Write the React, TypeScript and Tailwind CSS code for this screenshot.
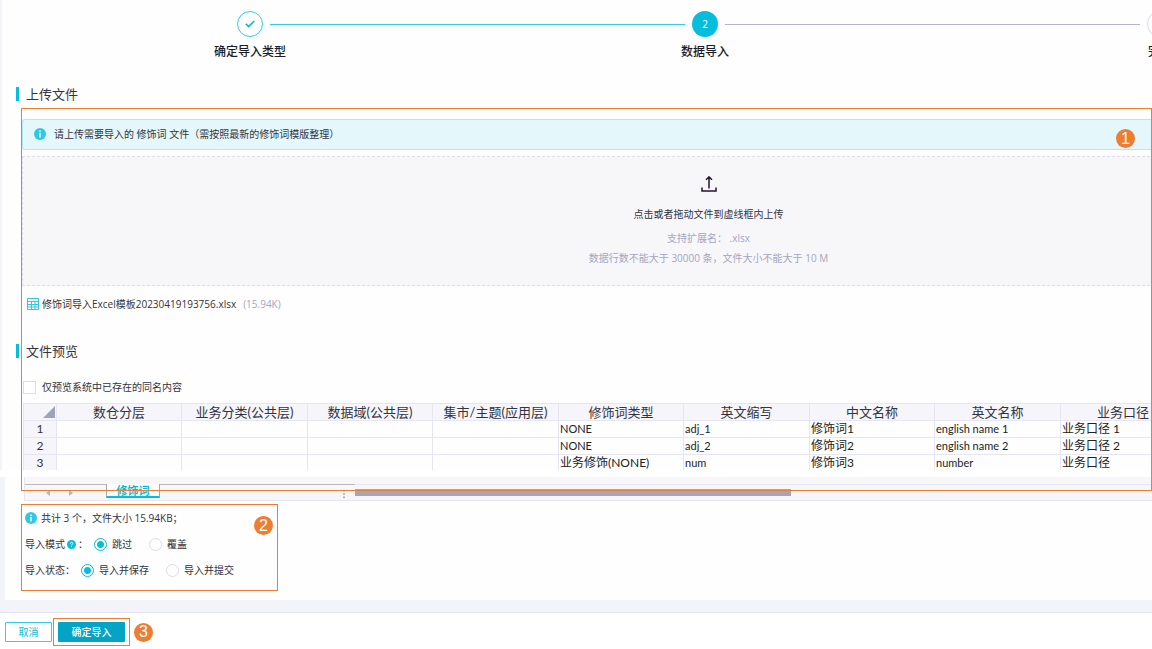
import React from 'react';
import { clsx } from 'clsx';

const columns = [
  '数仓分层',
  '业务分类(公共层)',
  '数据域(公共层)',
  '集市/主题(应用层)',
  '修饰词类型',
  '英文缩写',
  '中文名称',
  '英文名称',
  '业务口径',
];

const rows = [
  ['', '', '', '', 'NONE', 'adj_1', '修饰词1', 'english name 1', '业务口径 1'],
  ['', '', '', '', 'NONE', 'adj_2', '修饰词2', 'english name 2', '业务口径 2'],
  ['', '', '', '', '业务修饰(NONE)', 'num', '修饰词3', 'number', '业务口径'],
];

const isLatin = (text: string) => /^[\x20-\x7e]*$/.test(text);

const InfoIcon = () => (
  <svg viewBox="0 0 12 12" className="size-3 shrink-0" aria-hidden="true">
    <circle cx="6" cy="6" r="6" fill="#33c8e2" />
    <rect x="5.2" y="2.5" width="1.6" height="1.5" fill="#e6f8fb" />
    <rect x="5.2" y="4.8" width="1.6" height="4.6" fill="#e6f8fb" />
  </svg>
);

const HelpIcon = () => (
  <svg viewBox="0 0 9 9" className="size-[9px] shrink-0" aria-hidden="true">
    <circle cx="4.5" cy="4.5" r="4.5" fill="#06bddb" />
    <path d="M3.3 3.6c0-1.7 2.5-1.6 2.5-.1 0 .8-1.2.9-1.2 1.9M4.6 6.3v.8" fill="none" stroke="#fff" strokeWidth=".9" />
  </svg>
);

const SheetIcon = () => (
  <svg viewBox="0 0 12 12" className="size-3 shrink-0" fill="none" stroke="#33c8e2" aria-hidden="true">
    <path d="M.5.5h11v11H.5zM.5 3.5h11M.5 6.5h11M.5 9h11M4.5 3.5v8M8 3.5v8" />
  </svg>
);

const UploadIcon = () => (
  <svg viewBox="0 0 16 16" className="size-4" fill="none" stroke="#25152f" strokeWidth="1.5" aria-hidden="true">
    <path d="M8 12.5V1M5 3.8 8 .9l3 2.9M1 11.5V15h14v-3.5" />
  </svg>
);

const Badge = ({ n, className }: { n: number; className?: string }) => (
  <span
    className={clsx(
      "flex size-[19px] items-center justify-center rounded-full bg-[#ed7d31] font-['Liberation_Sans'] text-base leading-none text-white",
      className,
    )}
  >
    {n}
  </span>
);

const Step = ({ label, className, children }: { label: string; className: string; children?: React.ReactNode }) => (
  <li className="flex w-[26px] shrink-0 flex-col items-center">
    <span className={clsx('flex size-[26px] items-center justify-center rounded-full text-[10px]', className)}>
      {children}
    </span>
    <span className="mt-[7px] text-xs leading-4 font-medium whitespace-nowrap text-[#1c1c28]">{label}</span>
  </li>
);

const SectionTitle = ({ children }: { children: React.ReactNode }) => (
  <h2 className="flex h-[14px] items-center border-l-[3px] border-[#06bddb] pl-[7px] text-[13px] text-[#333340]">
    {children}
  </h2>
);

const RadioOption = ({ name, label, checked }: { name: string; label: string; checked?: boolean }) => (
  <label className="flex items-center gap-[5px]">
    <input
      type="radio"
      name={name}
      defaultChecked={checked}
      className="size-[13px] appearance-none rounded-full border border-[#dcdcec] bg-white checked:border-[#06bddb] checked:bg-[radial-gradient(circle,#06bddb_3px,white_4px)]"
    />
    {label}
  </label>
);

export default function App() {
  return (
    <div className="relative overflow-hidden bg-white font-['Open_Sans','Noto_Sans_CJK_SC',sans-serif] text-[10px] leading-4 text-[#333340]">
      <main className="relative">
        <div className="border-l-2 border-[#f3f4f9] bg-[#fefefe]">
          {/* Steps */}
          <ol className="-mr-[21px] flex gap-[7px] pt-[11px] pl-[235px]">
            <Step label="确定导入类型" className="border border-[#35cce4]">
              <svg viewBox="0 0 10 8" className="h-2 w-2.5" fill="none" stroke="#06bddb" strokeWidth="1.7" aria-hidden="true">
                <path d="M.8 3.9 3.7 6.6 9.2 1" />
              </svg>
            </Step>
            <li aria-hidden="true" className="mt-[13px] h-px flex-1 bg-[#35cce4]" />
            <Step label="数据导入" className="bg-[#06bddb] text-white">2</Step>
            <li aria-hidden="true" className="mt-[13px] h-px flex-1 bg-[#b4b4cf]" />
            <Step label="完成" className="border border-[#dcdcec]" />
          </ol>

          {/* Upload */}
          <section className="pt-[27px]">
            <div className="pl-[14px]">
              <SectionTitle>上传文件</SectionTitle>
            </div>
            <div className="mt-[18px] ml-5 flex h-[31px] items-center gap-2 rounded-l-[3px] border border-r-0 border-[#b3eaf2] bg-[#e4f7fb] pb-px pl-[11px]">
              <InfoIcon />
              请上传需要导入的 修饰词 文件（需按照最新的修饰词模版整理）
            </div>
            <button
              type="button"
              className="mt-1.5 ml-5 flex h-[130px] w-[calc(100%+223px)] flex-col items-center border border-dashed border-[#dcdcea] bg-[#f7f7fa] pt-[19px]"
            >
              <UploadIcon />
              <span className="mt-[14px]">点击或者拖动文件到虚线框内上传</span>
              <span className="mt-2 text-[#a5a5c0]">支持扩展名： .xlsx</span>
              <span className="mt-1 text-[#a5a5c0]">数据行数不能大于 30000 条，文件大小不能大于 10 M</span>
            </button>
            <div className="mt-2.5 ml-[25px] flex items-center gap-[3px]">
              <SheetIcon />
              <span>修饰词导入Excel模板20230419193756.xlsx</span>
              <span className="ml-1 text-[#a5a5c0]">(15.94K)</span>
            </div>
          </section>

          {/* Preview */}
          <section className="pt-8">
            <div className="pl-[14px]">
              <SectionTitle>文件预览</SectionTitle>
            </div>
            <label className="mt-[21px] ml-[21px] flex items-center gap-1.5">
              <input type="checkbox" className="size-[13px] appearance-none border border-[#dcdcec] bg-white" />
              仅预览系统中已存在的同名内容
            </label>
            <div className="mt-2 ml-[21px] h-[67px] overflow-hidden">
              <table className="w-[1162px] table-fixed border-collapse border-t border-l border-[#e6e6f2] font-['Lato','Noto_Sans_CJK_SC',sans-serif]">
                <colgroup>
                  <col className="w-[33px]" />
                  {columns.map((name, i) => (
                    <col key={name} className={i % 2 ? 'w-[126px]' : 'w-[125px]'} />
                  ))}
                </colgroup>
                <thead>
                  <tr className="h-[17px] bg-[#f6f6fa]">
                    <th className="border border-[#e6e6f2] p-0">
                      <svg viewBox="0 0 12 12" className="mr-px ml-auto size-3" aria-label="全选">
                        <path d="M12 0v12H0z" fill="#9ea2bd" />
                      </svg>
                    </th>
                    {columns.map((name) => (
                      <th key={name} scope="col" className="border border-[#e6e6f2] p-0 text-[13px] leading-4 font-normal whitespace-nowrap">
                        {name}
                      </th>
                    ))}
                  </tr>
                </thead>
                <tbody>
                  {rows.map((row, r) => (
                    <tr key={r} className="h-[17px]">
                      <th scope="row" className="border border-[#e6e6f2] bg-[#f6f6fa] p-0 text-xs leading-4 font-normal">
                        {r + 1}
                      </th>
                      {row.map((cell, c) => (
                        <td
                          key={c}
                          className={clsx(
                            'border border-[#e6e6f2] py-0 pr-0 pl-px leading-4 whitespace-nowrap text-[#222]',
                            isLatin(cell) ? 'text-[11px]' : 'text-xs',
                          )}
                        >
                          {cell}
                        </td>
                      ))}
                    </tr>
                  ))}
                </tbody>
              </table>
            </div>
          </section>
        </div>

        <div className="mt-[7px] border-l-[5px] border-[#f3f4f9] bg-[#fefefe]">
          {/* Sheet tabs */}
          <div className="ml-[19px] flex h-6 border-b border-l border-[#e6e6f2] bg-[#f7f7fa] pt-[7px]">
            <div className="flex h-[14px] w-[330px] text-[#aaaab4]">
              <div className="flex w-[81px] items-end gap-[19px] border-t border-[#bbb] pb-0.5 pl-[21px]">
                <svg viewBox="0 0 4 6" className="h-1.5 w-1" aria-hidden="true">
                  <path d="M4 0v6L0 3z" fill="#b5b5be" />
                </svg>
                <svg viewBox="0 0 4 6" className="h-1.5 w-1" aria-hidden="true">
                  <path d="M0 0v6l4-3z" fill="#b5b5be" />
                </svg>
              </div>
              <button
                type="button"
                className="flex w-[54px] items-center justify-center border-x border-b-2 border-x-[#aaa] border-b-[#06bddb] bg-white pt-0.5 text-[11px] leading-3 font-bold text-[#06bddb]"
              >
                修饰词
              </button>
              <div className="flex flex-1 items-end justify-end border-t border-[#bbb] pr-2.5">
                <svg viewBox="0 0 2 8" className="h-2 w-0.5" aria-hidden="true">
                  <path d="M0 0h2v1.5H0zM0 3.2h2v1.5H0zM0 6.4h2V8H0z" fill="#aaaab4" />
                </svg>
              </div>
            </div>
            <div className="flex-1 border-t border-[#e6e6f2] pt-1">
              <div className="h-[7px] w-[436px] bg-[#a3a6b5]" />
            </div>
          </div>

          {/* Options */}
          <form className="ml-4 flex h-[99px] w-[257px] flex-col pt-[9px] pl-1">
            <p className="flex items-center gap-1">
              <InfoIcon />
              共计 3 个，文件大小 15.94KB；
            </p>
            <div role="radiogroup" aria-labelledby="mode-label" className="mt-2.5 flex items-center">
              <span id="mode-label" className="flex w-[69px] items-center gap-0.5">
                导入模式 <HelpIcon />：
              </span>
              <div className="flex gap-[17px]">
                <RadioOption name="mode" label="跳过" checked />
                <RadioOption name="mode" label="覆盖" />
              </div>
            </div>
            <div role="radiogroup" aria-labelledby="status-label" className="mt-2.5 flex items-center">
              <span id="status-label" className="w-14">导入状态：</span>
              <div className="flex gap-[17px]">
                <RadioOption name="status" label="导入并保存" checked />
                <RadioOption name="status" label="导入并提交" />
              </div>
            </div>
          </form>
        </div>

        {/* Callouts drawn over the content */}
        <div className="pointer-events-none absolute top-[108px] right-0 left-[21px] h-[383px] border border-[#ed7d31]">
          <Badge n={1} className="absolute top-5 right-4" />
        </div>
        <div className="pointer-events-none absolute top-[504px] left-[21px] h-[87px] w-[257px] border border-[#ed7d31]">
          <Badge n={2} className="absolute top-[11px] right-1" />
        </div>
      </main>

      <footer className="border-t-[12px] border-[#f3f4f9]">
        <div className="flex items-center border-t border-[#e2e3ef] pt-[5px] pb-[3px] pl-[5px]">
          <button type="button" className="h-5 w-[47px] rounded-[1px] border border-[#35cce4] bg-white text-[#06bddb]">
            取消
          </button>
          <div className="ml-px border border-[#ed7d31] px-1 py-[3px]">
            <button type="button" className="block h-5 w-[67px] rounded-[1px] bg-[#06a4c4] font-medium text-white">
              确定导入
            </button>
          </div>
          <Badge n={3} className="ml-1" />
        </div>
      </footer>
    </div>
  );
}
